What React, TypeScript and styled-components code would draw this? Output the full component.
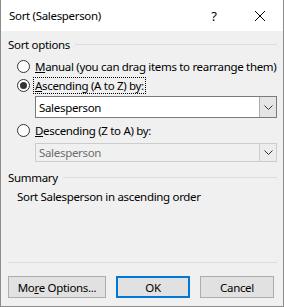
import React from "react";
import styled, { createGlobalStyle } from "styled-components";

const GlobalStyle = createGlobalStyle`
  html, body {
    margin: 0;
    padding: 0;
    background: #f0f0f0;
  }
  * {
    box-sizing: border-box;
  }
`;

const Window = styled.div`
  width: 284px;
  height: 307px;
  display: flex;
  flex-direction: column;
  background: #f0f0f0;
  border: 1px solid #8c8c8c;
  border-top: none;
  font-family: "Segoe UI", "Noto Sans", "Open Sans", sans-serif;
  font-size: 11.5px;
  letter-spacing: -0.32px;
  white-space: nowrap;
  color: #000;
`;

const TitleBar = styled.div`
  height: 31px;
  display: flex;
  align-items: center;
  background: #fff;
  padding-left: 8px;
`;

const TitleText = styled.div`
  flex: 1;
`;

const TitleButton = styled.div`
  width: 46px;
  height: 31px;
  display: flex;
  align-items: center;
  justify-content: center;
  font-size: 13px;
`;

const Body = styled.div`
  flex: 1;
  display: flex;
  flex-direction: column;
  padding: 5px 6px 0 7px;
`;

const GroupHeader = styled.div<{ $top?: number }>`
  display: flex;
  align-items: center;
  gap: 5px;
  height: 16px;
  margin-top: ${({ $top }) => $top ?? 0}px;
  &::after {
    content: "";
    flex: 1;
    height: 1px;
    background: #dcdcdc;
  }
`;

const RadioRow = styled.label<{ $top: number }>`
  display: flex;
  align-items: center;
  height: 16px;
  margin-top: ${({ $top }) => $top}px;
  padding-left: 9px;
`;

const RadioCircle = styled.span<{ $checked?: boolean }>`
  width: 13px;
  height: 13px;
  flex-shrink: 0;
  border-radius: 50%;
  border: 1px solid #333;
  background: #fff;
  display: flex;
  align-items: center;
  justify-content: center;
  margin-right: 4px;
  &::after {
    content: "";
    display: ${({ $checked }) => ($checked ? "block" : "none")};
    width: 7px;
    height: 7px;
    border-radius: 50%;
    background: #333;
  }
`;

const RadioLabel = styled.span<{ $focused?: boolean }>`
  padding: 0 1px;
  line-height: 15px;
  outline: ${({ $focused }) => ($focused ? "1px dotted #000" : "none")};
  outline-offset: 0;
`;

const Key = styled.span`
  text-decoration: underline;
`;

const Select = styled.div<{ $disabled?: boolean; $top: number; $height: number }>`
  margin-top: ${({ $top }) => $top}px;
  margin-left: 27px;
  width: 242px;
  height: ${({ $height }) => $height}px;
  display: flex;
  border: 1px solid ${({ $disabled }) => ($disabled ? "#cccccc" : "#7a7a7a")};
  background: ${({ $disabled }) => ($disabled ? "#f0f0f0" : "#fff")};
  color: ${({ $disabled }) => ($disabled ? "#6d6d6d" : "#000")};
`;

const SelectValue = styled.div`
  flex: 1;
  display: flex;
  align-items: center;
  padding-left: 3px;
`;

const SelectArrow = styled.div<{ $disabled?: boolean }>`
  width: 17px;
  display: flex;
  align-items: center;
  justify-content: center;
  background: ${({ $disabled }) => ($disabled ? "#ececec" : "#e5e5e5")};
  border-left: 1px solid ${({ $disabled }) => ($disabled ? "#cccccc" : "#adadad")};
`;

const SummaryText = styled.div`
  margin-top: 4px;
  padding-left: 9px;
  height: 16px;
  line-height: 16px;
`;

const Footer = styled.div`
  margin-top: auto;
  border-top: 1px solid #dcdcdc;
  display: flex;
  gap: 10px;
  padding: 13px 0 8px 0;
`;

const Button = styled.div<{ $width: number; $default?: boolean }>`
  width: ${({ $width }) => $width}px;
  height: 22px;
  display: flex;
  align-items: center;
  justify-content: center;
  background: #e1e1e1;
  border: ${({ $default }) => ($default ? "2px solid #0078d7" : "1px solid #adadad")};
`;

const Chevron = () => (
  <svg width="9" height="5" viewBox="0 0 9 5">
    <path d="M0.5 0.5 L4.5 4.5 L8.5 0.5" fill="none" stroke="#333" strokeWidth="1" />
  </svg>
);

const CloseIcon = () => (
  <svg width="10" height="10" viewBox="0 0 10 10">
    <path d="M0 0 L10 10 M10 0 L0 10" stroke="#000" strokeWidth="1" />
  </svg>
);

const App = () => {
  return (
    <Window>
      <GlobalStyle />
      <TitleBar>
        <TitleText>Sort (Salesperson)</TitleText>
        <TitleButton>?</TitleButton>
        <TitleButton>
          <CloseIcon />
        </TitleButton>
      </TitleBar>
      <Body>
        <GroupHeader>Sort options</GroupHeader>
        <RadioRow $top={6}>
          <RadioCircle />
          <RadioLabel>
            <Key>M</Key>anual (you can drag items to rearrange them)
          </RadioLabel>
        </RadioRow>
        <RadioRow $top={3}>
          <RadioCircle $checked />
          <RadioLabel $focused>
            <Key>A</Key>scending (A to Z) by:
          </RadioLabel>
        </RadioRow>
        <Select $top={3} $height={22}>
          <SelectValue>Salesperson</SelectValue>
          <SelectArrow>
            <Chevron />
          </SelectArrow>
        </Select>
        <RadioRow $top={4}>
          <RadioCircle />
          <RadioLabel>
            <Key>D</Key>escending (Z to A) by:
          </RadioLabel>
        </RadioRow>
        <Select $top={5} $height={19} $disabled>
          <SelectValue>Salesperson</SelectValue>
          <SelectArrow $disabled>
            <Chevron />
          </SelectArrow>
        </Select>
        <GroupHeader $top={7}>Summary</GroupHeader>
        <SummaryText>Sort Salesperson in ascending order</SummaryText>
        <Footer>
          <Button $width={98}>
            <span>
              Mo<Key>r</Key>e Options...
            </span>
          </Button>
          <Button $width={74} $default>
            OK
          </Button>
          <Button $width={74}>Cancel</Button>
        </Footer>
      </Body>
    </Window>
  );
};

export default App;
